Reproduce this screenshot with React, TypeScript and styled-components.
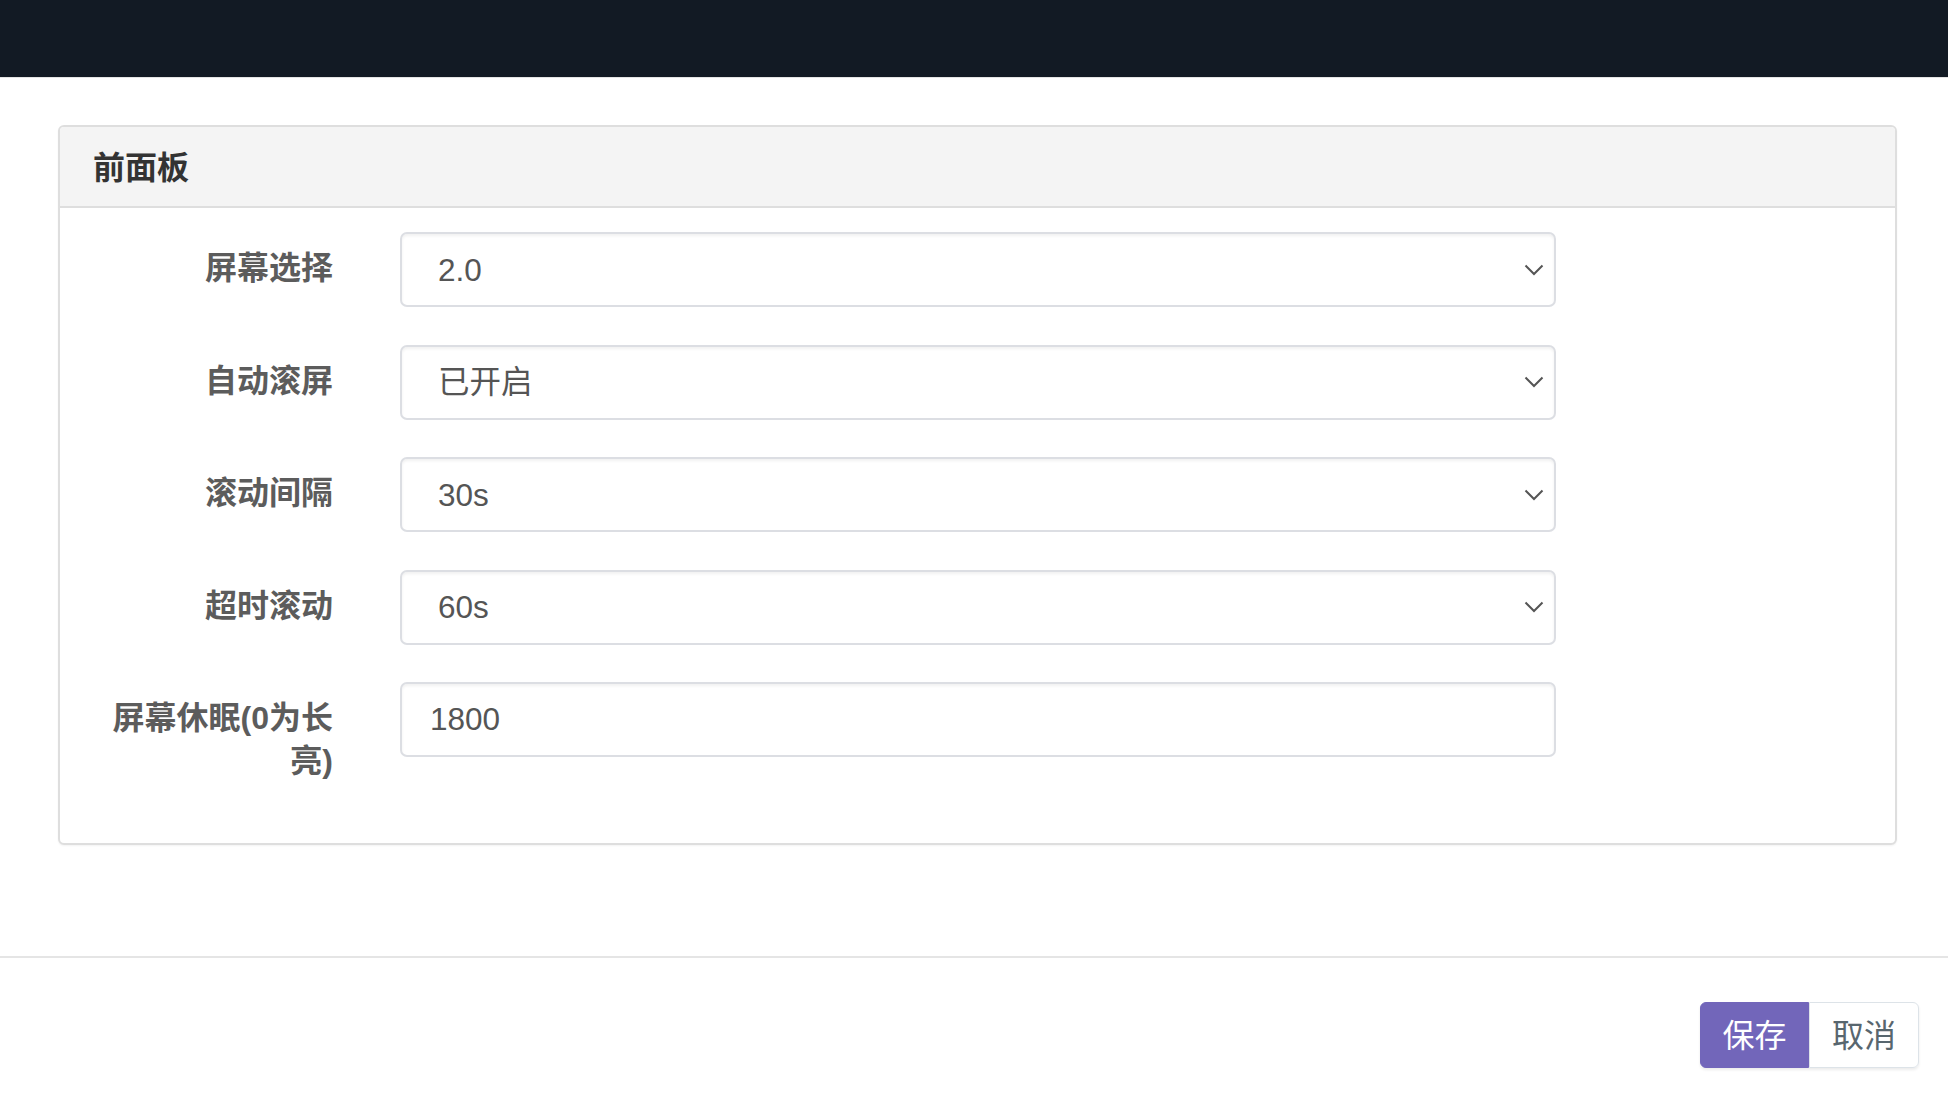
import React from "react";
import styled, { createGlobalStyle } from "styled-components";

const Global = createGlobalStyle`
  html, body { margin: 0; padding: 0; background: #fff; }
  body { font-family: "Liberation Sans", "Noto Sans CJK SC", sans-serif; }
  * { box-sizing: border-box; }
`;

const TopBar = styled.header`
  height: 78px;
  background: #121a24;
  border-bottom: 1px solid #e4e4e4;
`;

const Main = styled.main`
  padding: 47px 51px 111px 58px;
`;

const Panel = styled.section`
  border: 2px solid #dedede;
  border-radius: 6px;
  background: #fff;
  box-shadow: 0 1px 2px rgba(0, 0, 0, 0.05);
  overflow: hidden;
`;

const PanelHeader = styled.div`
  height: 81px;
  background: #f4f4f4;
  border-bottom: 2px solid #dedede;
  display: flex;
  align-items: center;
  padding: 0 0 4px 33px;
  font-family: "Noto Sans CJK SC", sans-serif;
  font-weight: 700;
  font-size: 32px;
  color: #333;
`;

const PanelBody = styled.div`
  padding: 24px 0 60px 0;
`;

const Row = styled.div`
  display: grid;
  grid-template-columns: 273px 1156px;
  column-gap: 67px;
  align-items: start;
  margin-bottom: 37.5px;
  &:last-child { margin-bottom: 0; }
`;

const Label = styled.label`
  padding: 15px 0 0 36px;
  text-align: right;
  font-family: "Liberation Sans", "Noto Sans CJK SC", sans-serif;
  font-weight: 700;
  font-size: 32px;
  line-height: 43px;
  color: #5c5c5c;
`;

const Control = styled.div`
  position: relative;
  height: 75px;
`;

const fieldBase = `
  width: 100%;
  height: 75px;
  border: 2px solid #dcdee3;
  border-radius: 7px;
  background: #fff;
  box-shadow: inset 0 2px 3px rgba(0, 0, 0, 0.06);
  font-family: "Liberation Sans", "Noto Sans CJK SC", sans-serif;
  font-size: 31.5px;
  color: #555;
  outline: none;
  margin: 0;
`;

const Select = styled.select`
  ${fieldBase}
  appearance: none;
  -webkit-appearance: none;
  padding: 0 60px 0 36px;
`;

const TextInput = styled.input`
  ${fieldBase}
  padding: 0 28px;
`;

const Chevron = styled.svg`
  position: absolute;
  right: 12px;
  top: 50%;
  transform: translateY(-50%);
  width: 20px;
  height: 12px;
  pointer-events: none;
`;

const Footer = styled.footer`
  border-top: 2px solid #e5e5e5;
  display: flex;
  justify-content: flex-end;
  padding: 44px 29px 28px 0;
`;

const BtnGroup = styled.div`
  display: flex;
  box-shadow: 0 2px 3px rgba(0, 0, 0, 0.08);
  border-radius: 6px;
`;

const Button = styled.button<{ $primary?: boolean }>`
  height: 66px;
  width: ${(p) => (p.$primary ? "109px" : "110px")};
  font-family: "Noto Sans CJK SC", sans-serif;
  font-size: 32px;
  font-weight: 400;
  line-height: 1;
  padding: 0 0 5px 0;
  cursor: pointer;
  border: 1px solid ${(p) => (p.$primary ? "#7266ba" : "#dde3e8")};
  background: ${(p) => (p.$primary ? "#7266ba" : "#fff")};
  color: ${(p) => (p.$primary ? "#fff" : "#58666e")};
  border-radius: ${(p) => (p.$primary ? "6px 0 0 6px" : "0 6px 6px 0")};
`;

const ChevronIcon = () => (
  <Chevron viewBox="0 0 20 12">
    <path d="M1.5 1.5 L10 10 L18.5 1.5" fill="none" stroke="#555" strokeWidth="2" />
  </Chevron>
);

type Field = { label: string; value: string; options?: string[] };

const fields: Field[] = [
  { label: "屏幕选择", value: "2.0", options: ["1.0", "2.0"] },
  { label: "自动滚屏", value: "已开启", options: ["已开启", "已关闭"] },
  { label: "滚动间隔", value: "30s", options: ["10s", "30s", "60s"] },
  { label: "超时滚动", value: "60s", options: ["30s", "60s", "120s"] },
  { label: "屏幕休眠(0为长亮)", value: "1800" },
];

export default function App() {
  return (
    <>
      <Global />
      <TopBar />
      <Main>
        <Panel>
          <PanelHeader>前面板</PanelHeader>
          <PanelBody>
            {fields.map((f) => (
              <Row key={f.label}>
                <Label>{f.label}</Label>
                <Control>
                  {f.options ? (
                    <>
                      <Select defaultValue={f.value}>
                        {f.options.map((o) => (
                          <option key={o} value={o}>
                            {o}
                          </option>
                        ))}
                      </Select>
                      <ChevronIcon />
                    </>
                  ) : (
                    <TextInput defaultValue={f.value} />
                  )}
                </Control>
              </Row>
            ))}
          </PanelBody>
        </Panel>
      </Main>
      <Footer>
        <BtnGroup>
          <Button $primary>保存</Button>
          <Button>取消</Button>
        </BtnGroup>
      </Footer>
    </>
  );
}
